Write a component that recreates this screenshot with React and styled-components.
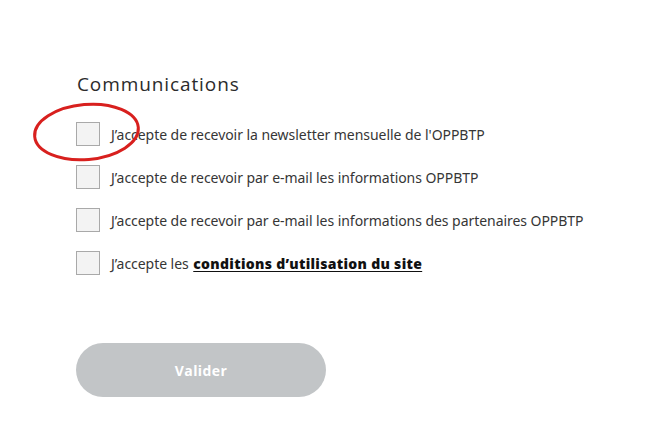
import React from "react";
import styled, { createGlobalStyle } from "styled-components";

const Global = createGlobalStyle`
  html, body { margin: 0; padding: 0; background: #ffffff; }
  body { width: 664px; height: 426px; overflow: hidden; }
`;

const Page = styled.div`
  position: relative;
  width: 664px;
  height: 426px;
  box-sizing: border-box;
  padding: 72px 0 0 76px;
  background: #ffffff;
`;

const Heading = styled.h2`
  margin: 0 0 26px 1px;
  font-family: "Open Sans", sans-serif;
  font-weight: 400;
  font-size: 19px;
  line-height: 24px;
  letter-spacing: 0.9px;
  color: #2b2b2b;
`;

const List = styled.div`
  display: flex;
  flex-direction: column;
  gap: 19px;
`;

const Row = styled.label`
  display: flex;
  align-items: center;
  gap: 11px;
  height: 24px;
`;

const Box = styled.span`
  display: block;
  width: 22px;
  height: 22px;
  flex: none;
  border: 1px solid #a9a9a9;
  background: #f3f3f3;
`;

const Text = styled.span`
  font-family: "Noto Sans", sans-serif;
  font-size: 14px;
  letter-spacing: -0.05px;
  color: #363636;
  white-space: nowrap;
`;

const Link = styled.a`
  margin-left: 1px;
  font-family: "Open Sans", sans-serif;
  font-weight: 800;
  letter-spacing: 0.3px;
  color: #111111;
  text-decoration: underline;
  text-underline-offset: 2px;
`;

const Button = styled.button`
  margin-top: 68px;
  width: 250px;
  height: 54px;
  border: none;
  border-radius: 27px;
  background: #c2c5c7;
  color: #ffffff;
  font-family: "Open Sans", sans-serif;
  font-weight: 700;
  font-size: 14px;
  letter-spacing: 0.4px;
`;

const Annotation = styled.svg`
  position: absolute;
  left: 30px;
  top: 98px;
  pointer-events: none;
`;

export default function App() {
  const items = [
    "J\u2019accepte de recevoir la newsletter mensuelle de l'OPPBTP",
    "J\u2019accepte de recevoir par e-mail les informations OPPBTP",
    "J\u2019accepte de recevoir par e-mail les informations des partenaires OPPBTP",
  ];
  return (
    <>
      <Global />
      <Page>
        <Heading>Communications</Heading>
        <List>
          {items.map((t) => (
            <Row key={t}>
              <Box />
              <Text>{t}</Text>
            </Row>
          ))}
          <Row>
            <Box />
            <Text>
              J’accepte les <Link>conditions d’utilisation du site</Link>
            </Text>
          </Row>
        </List>
        <Button>Valider</Button>
        <Annotation width="115" height="66" viewBox="0 0 115 66">
          <ellipse
            cx="56.5"
            cy="34"
            rx="52"
            ry="27.5"
            fill="none"
            stroke="#d8201e"
            strokeWidth="3"
            transform="rotate(-5 56.5 34)"
          />
        </Annotation>
      </Page>
    </>
  );
}
